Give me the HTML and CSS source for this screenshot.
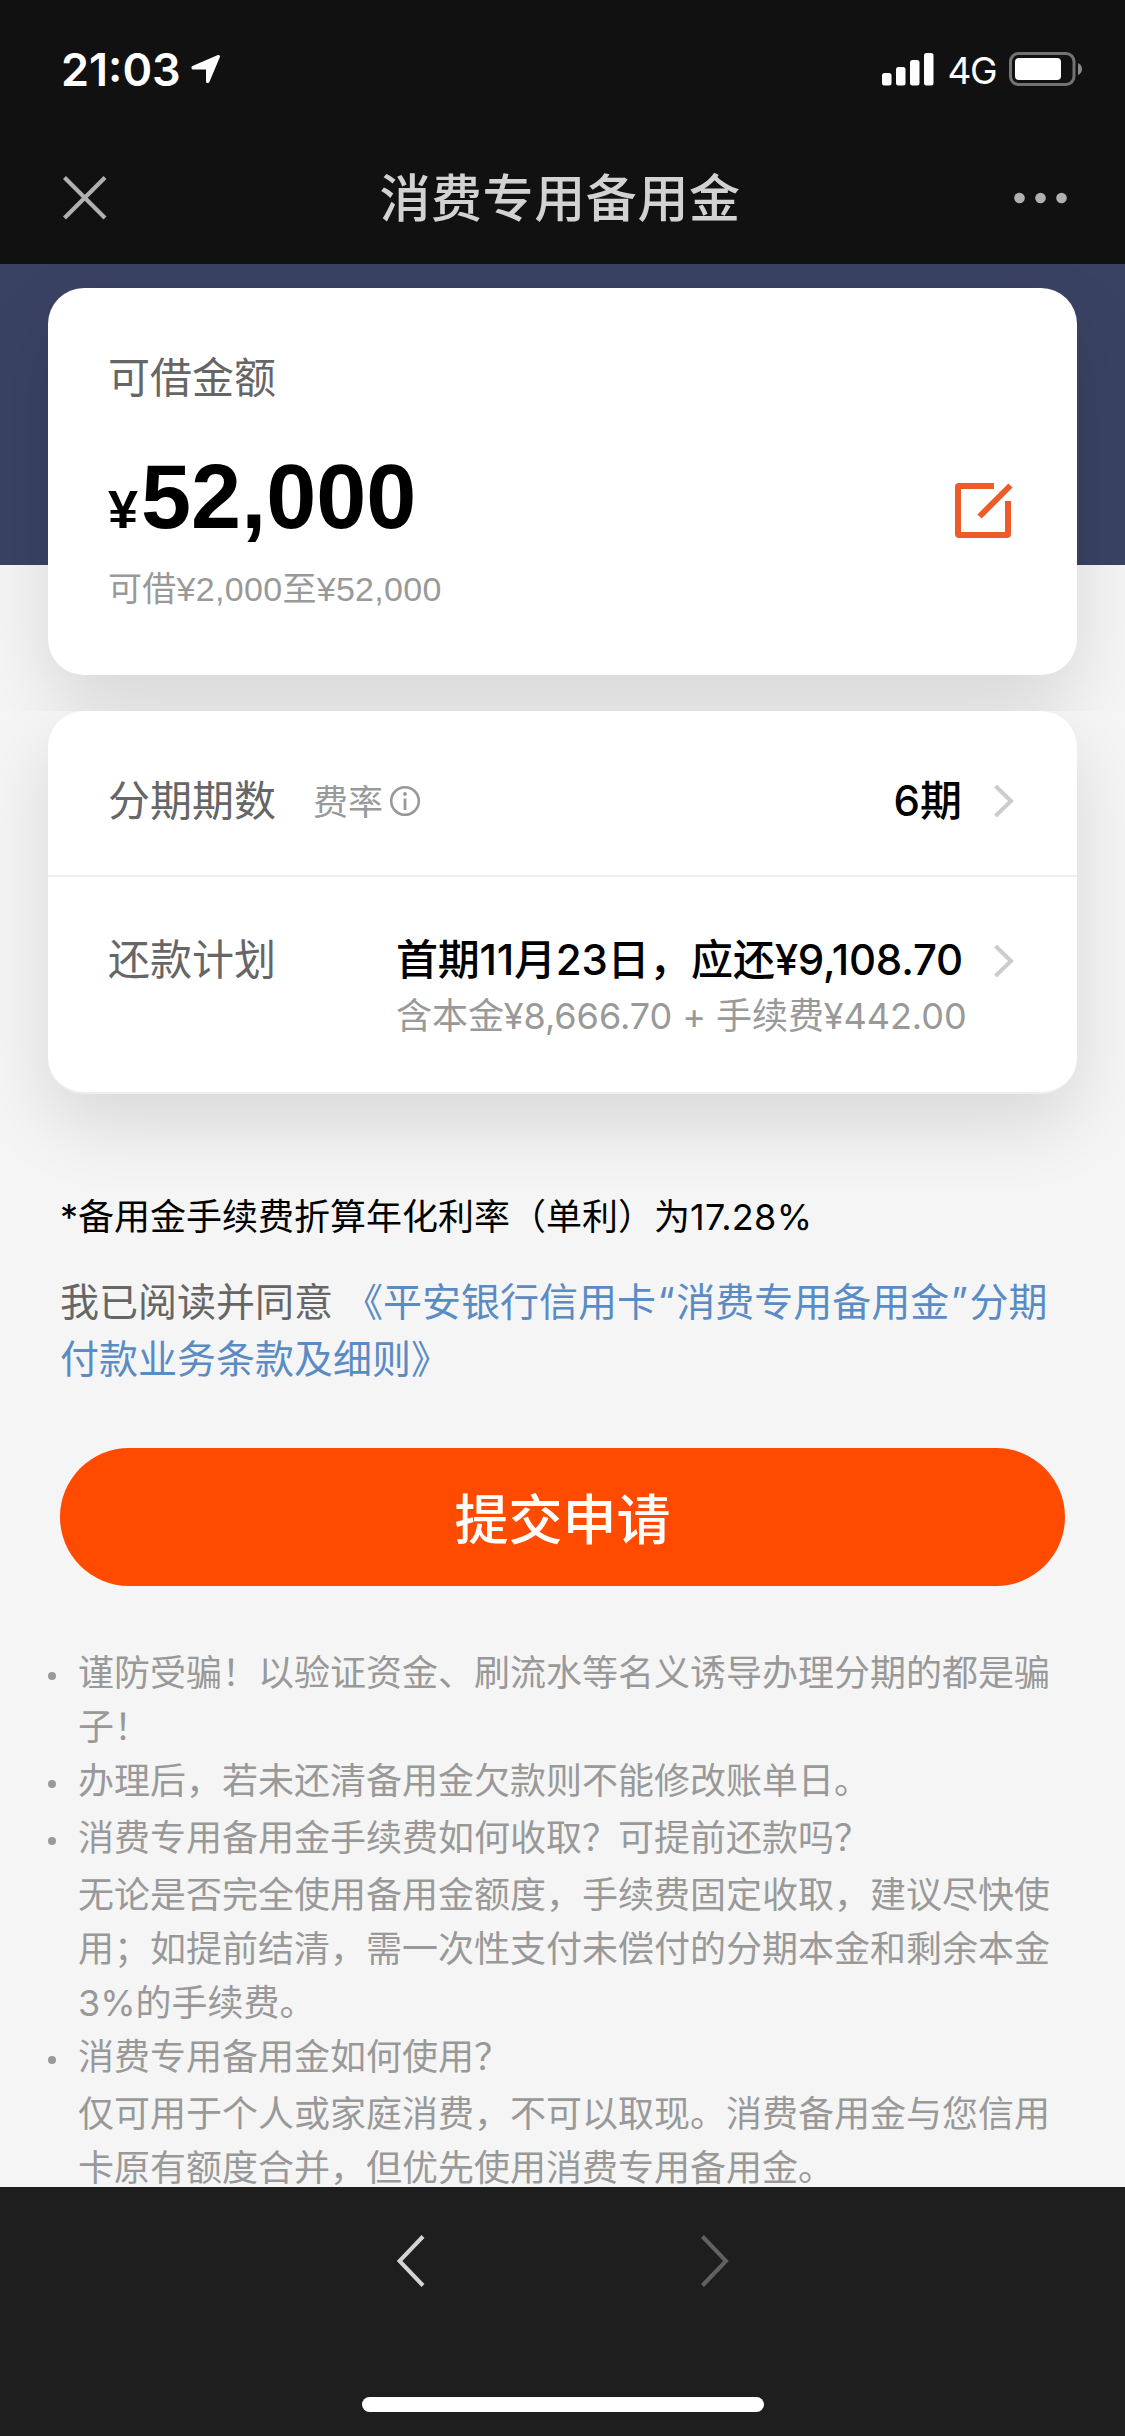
FILE: index.html
```html
<!DOCTYPE html>
<html lang="zh-CN">
<head>
<meta charset="utf-8">
<title>消费专用备用金</title>
<link rel="stylesheet" href="styles.css">
</head>
<body>
<header class="top">
  <div class="status">
    <span class="time">21:03</span>
    <svg class="loc" width="32" height="32" viewBox="0 0 32 32"><path d="M3 14.300 28.500 3.500 18 28.500H17.500V15H3Z" fill="#fff" stroke="#fff" stroke-width="3" stroke-linejoin="round"/></svg>
    <span class="spacer"></span>
    <svg class="signal" width="52" height="33" viewBox="0 0 52 33" fill="#fff"><rect x="0" y="20" width="9.500" height="12.500" rx="2.500"/><rect x="14" y="14" width="9.500" height="18.500" rx="2.500"/><rect x="28" y="7" width="9.500" height="25.500" rx="2.500"/><rect x="42" y="0" width="9.500" height="32.500" rx="2.500"/></svg>
    <span class="net">4G</span>
    <svg class="battery" width="74" height="34" viewBox="0 0 74 34"><rect x="1.500" y="1.500" width="63.500" height="31" rx="8" fill="none" stroke="#737373" stroke-width="3"/><rect x="6" y="6" width="46" height="22" rx="4" fill="#fff"/><path d="M69 11Q73 13 73 17T69 23Z" fill="#8a8a8a"/></svg>
  </div>
  <div class="nav">
    <svg class="close" width="44" height="44" viewBox="0 0 44 44"><path d="M1.500 1.500 42 42M42 1.500 1.500 42" stroke="#b0b0b0" stroke-width="4.200"/></svg>
    <h1 class="title">消费专用备用金</h1>
    <svg class="more" width="54" height="12" viewBox="0 0 54 12" fill="#b0b0b0"><circle cx="5.500" cy="6" r="5.300"/><circle cx="26.500" cy="6" r="5.300"/><circle cx="47.500" cy="6" r="5.300"/></svg>
  </div>
</header>
<main class="page">
  <section class="hero">
    <div class="card amount-card">
      <div class="amount-info">
        <p class="label">可借金额</p>
        <p class="amount"><span class="yen">¥</span>52,000</p>
        <p class="range">可借¥2,000至¥52,000</p>
      </div>
      <svg class="edit" width="60" height="60" viewBox="0 0 60 60" fill="none" stroke="#ee5a28" stroke-width="6"><path d="M41 5H6Q5 5 5 6V53Q5 54 6 54H54Q55 54 55 53V20"/><path d="M26.500 35.500 57.500 4.500"/></svg>
    </div>
  </section>
  <section class="plan">
    <div class="card plan-card">
      <div class="row row-term">
        <span class="label">分期期数</span>
        <span class="rate">费率</span>
        <svg class="info" width="32" height="32" viewBox="0 0 32 32"><circle cx="16" cy="16" r="13.800" fill="none" stroke="#999" stroke-width="2.600"/><path d="M16 13.500V25" stroke="#999" stroke-width="2.800"/><circle cx="16" cy="9" r="1.900" fill="#999"/></svg>
        <span class="spacer"></span>
        <span class="value">6期</span>
        <svg class="arrow" width="22" height="34" viewBox="0 0 22 34"><path d="M2.500 2 18 17 2.500 32" fill="none" stroke="#ccc" stroke-width="4"/></svg>
      </div>
      <div class="row row-repay">
        <span class="label">还款计划</span>
        <div class="repay">
          <p class="value">首期11月23日，应还¥9,108.70</p>
          <p class="detail">含本金¥8,666.70 + 手续费¥442.00</p>
        </div>
        <svg class="arrow" width="22" height="34" viewBox="0 0 22 34"><path d="M2.500 2 18 17 2.500 32" fill="none" stroke="#ccc" stroke-width="4"/></svg>
      </div>
    </div>
    <p class="note">*备用金手续费折算年化利率（单利）为<span class="pct">17.28%</span></p>
    <p class="agree">我已阅读并同意 <a class="link">《平安银行信用卡<span class="q">“</span>消费专用备用金<span class="q">”</span>分期<br>付款业务条款及细则》</a></p>
    <button class="submit">提交申请</button>
    <ul class="tips">
      <li class="tip">谨防受骗！以验证资金、刷流水等名义诱导办理分期的都是骗<br>子！</li>
      <li class="tip">办理后，若未还清备用金欠款则不能修改账单日。</li>
      <li class="tip tip-q">消费专用备用金手续费如何收取？可提前还款吗？
        <p class="answer">无论是否完全使用备用金额度，手续费固定收取，建议尽快使<br>用；如提前结清，需一次性支付未偿付的分期本金和剩余本金<br>3%的手续费。</p></li>
      <li class="tip">消费专用备用金如何使用？
        <p class="answer">仅可用于个人或家庭消费，不可以取现。消费备用金与您信用<br>卡原有额度合并，但优先使用消费专用备用金。</p></li>
    </ul>
  </section>
  <div class="marks" aria-hidden="true">
    <span class="mark mark-1">P21092621034512359</span>
    <span class="mark mark-2">P21092621034512359</span>
    <span class="mark mark-3">P21092621034512359</span>
    <span class="mark mark-4">P21092621034512359</span>
    <span class="mark mark-5">P21092621034512359</span>
  </div>
</main>
<footer class="bottom">
  <div class="pager">
    <svg width="30" height="54" viewBox="0 0 30 54"><path d="M26 2.500 2.500 27 26 51.500" fill="none" stroke="#d4d4d4" stroke-width="4"/></svg>
    <svg width="30" height="54" viewBox="0 0 30 54"><path d="M3.500 2.500 27 27 3.500 51.500" fill="none" stroke="#616161" stroke-width="4"/></svg>
  </div>
  <div class="home"></div>
</footer>
</body>
</html>
```
FILE: styles.css
```css
* { box-sizing: border-box; margin: 0; padding: 0; }
body {
  width: 1125px;
  height: 2436px;
  display: flex;
  flex-direction: column;
  overflow: hidden;
  background: #f5f5f5;
  color: #000;
  font-family: Inter, "Noto Sans CJK SC", sans-serif;
  white-space: nowrap;
}
svg { display: block; flex: none; }
.spacer { flex: 1; }

.top { height: 264px; flex: none; background: #111; }
.status {
  height: 138px;
  padding: 0 42px 0 61px;
  display: flex;
  align-items: center;
  color: #fff;
}
.time { font-size: 45px; font-weight: 600; }
.loc { margin-left: 9px; }
.net { margin: 2px 13px 0 13px; font-size: 37px; letter-spacing: -1.5px; }
.nav {
  height: 126px;
  padding: 0 57px 6px 63px;
  display: flex;
  align-items: center;
  justify-content: space-between;
}
.title { margin: 2px 0 0 -1px; font-size: 51px; line-height: 60px; font-weight: 500; letter-spacing: 0.6px; color: #d2d2d2; }

.page { position: relative; height: 1923px; flex: none; overflow: hidden; }
.hero {
  height: 447px;
  padding: 24px 48px 0;
  overflow: hidden;
  background: linear-gradient(#3a4263 301px, #f5f5f5 301px);
}
.card { background: #fff; border-radius: 36px; box-shadow: 0 30px 75px rgba(0, 0, 0, 0.12); }
.amount-card {
  height: 387px;
  padding: 60px 60px 0 60px;
  display: flex;
  justify-content: space-between;
}
.label { font-size: 42px; line-height: 60px; color: #666; }
.amount {
  margin-top: 37px;
  font: bold 90px/104px "Liberation Sans", sans-serif;
}
.yen { margin-right: 3px; font-size: 54px; }
.range {
  margin-top: 3px;
  color: #999;
  font: 34px/50px "Liberation Sans", "Noto Sans CJK SC", sans-serif;
  letter-spacing: 0.3px;
}
.edit { margin: 133px 4px 0 0; }

.plan { position: relative; background: #f5f5f5; padding: 0 60px; }
.plan-card { height: 383px; margin: 0 -12px; border-bottom: 2px solid #eee; }
.row { display: flex; padding: 0 62px 0 60px; }
.row-term { height: 166px; align-items: center; padding-top: 16px; border-bottom: 2px solid #eee; }
.rate { margin: -3px 0 0 37px; font-size: 35px; color: #999; }
.info { margin: -1px 0 0 6px; }
.value { font-size: 42px; line-height: 60px; font-weight: 500; }
.arrow { margin-left: 31px; }
.row-repay { padding-top: 53px; }
.row-repay .arrow { margin: 14px 0 0 29px; }
.repay { width: 568px; margin-left: auto; }
.repay .value { letter-spacing: -0.22px; }
.detail { font-size: 36px; line-height: 52px; letter-spacing: -0.06px; color: #999; }
.note { margin-top: 96px; font-size: 36px; line-height: 54px; }
.pct { letter-spacing: 0.3px; }
.agree { margin-top: 29px; font-size: 39px; line-height: 57px; color: #666; }
.link { color: #5a8bc4; }
.q { padding: 0 1.5px; }
.submit {
  display: block;
  width: 1005px;
  height: 138px;
  margin-top: 61px;
  border: 0;
  border-radius: 69px;
  background: #ff4b00;
  color: #fff;
  font: 500 54px/80px "Noto Sans CJK SC", sans-serif;
}
.tips { margin-top: 60px; padding-left: 18px; list-style: none; font-size: 36px; line-height: 54px; color: #999; }
.tip { position: relative; }
.tip::before {
  content: "";
  position: absolute;
  left: -30px;
  top: 26px;
  width: 8px;
  height: 8px;
  border-radius: 50%;
  background: #999;
}
.tip-q { margin-top: 3px; }
.answer { margin-top: 3px; }

/* faint trace number repeated over the page */
.mark {
  position: absolute;
  left: -3px;
  color: rgba(130, 160, 80, 0.025);
  font: 47px/54px "Liberation Sans", sans-serif;
  letter-spacing: 2.4px;
  pointer-events: none;
}
.mark-1 { top: 5px; }
.mark-2 { top: 187px; }
.mark-3 { top: 370px; }
.mark-4 { top: 1056px; }
.mark-5 { top: 1805px; }

.bottom { flex: 1; background: #1e1e1e; display: flex; flex-direction: column; align-items: center; }
.pager { margin-top: 47px; display: flex; gap: 272px; }
.home { width: 402px; height: 15px; margin-top: 109px; border-radius: 8px; background: #fff; }
```
